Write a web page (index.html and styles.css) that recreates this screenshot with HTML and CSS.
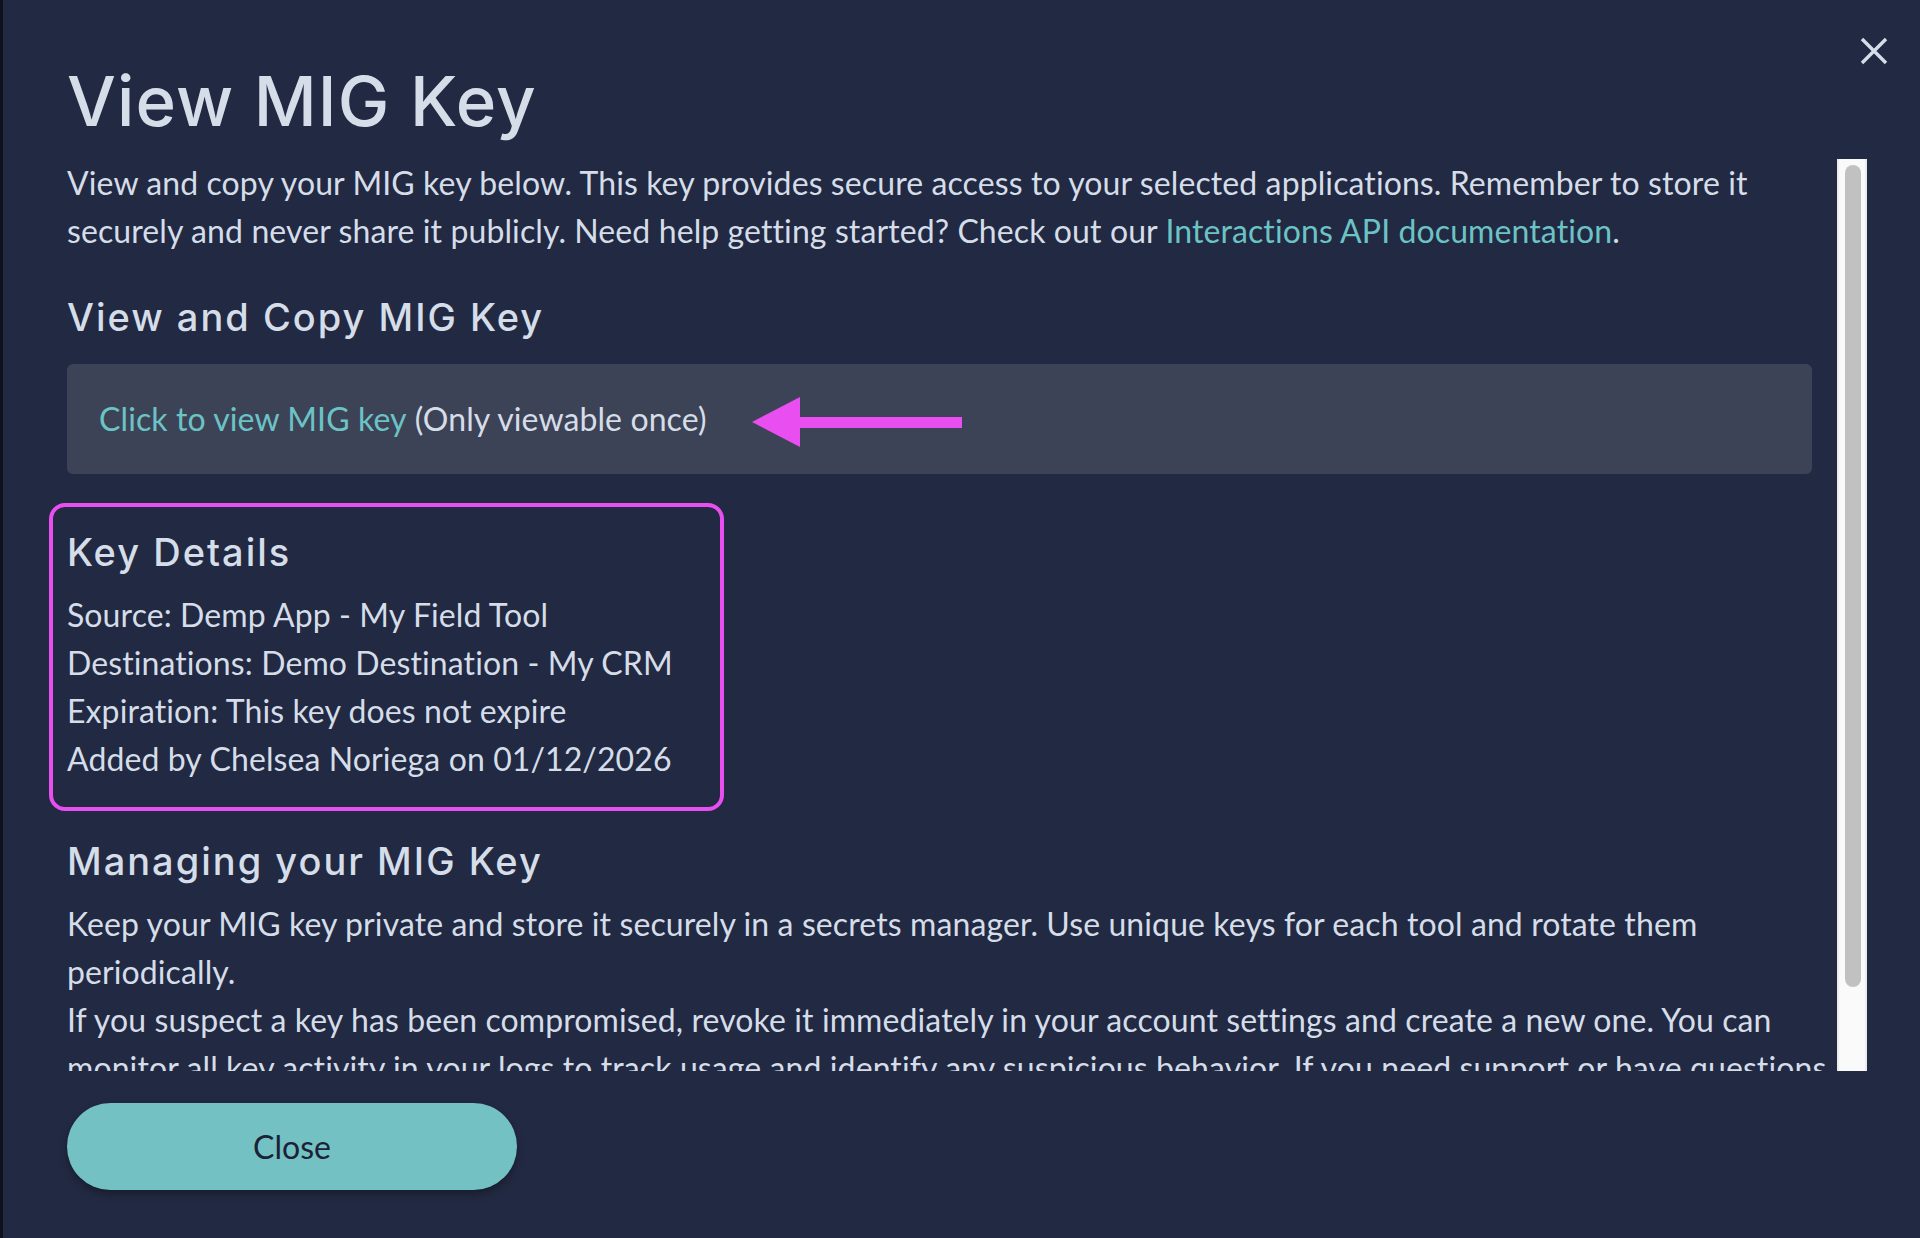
FILE: index.html
```html
<!DOCTYPE html>
<html lang="en">
<head>
<meta charset="utf-8">
<title>View MIG Key</title>
<link rel="stylesheet" href="styles.css">
</head>
<body>
<div class="modal">
  <header class="modal-header">
    <h1 class="title">View MIG Key</h1>
    <button class="close-x" aria-label="Close">
      <svg width="28" height="28" viewBox="0 0 28 28"><path d="M2 2 L26 26 M26 2 L2 26" stroke="#d5dde8" stroke-width="3.4" stroke-linecap="butt"/></svg>
    </button>
  </header>

  <div class="scroll-wrap">
    <div class="scroll-content">
      <p class="text">View and copy your MIG key below. This key provides secure access to your selected applications. Remember to store it securely and never share it publicly. Need help getting started? Check out our <a class="link" href="#">Interactions API documentation</a>.</p>

      <h2 class="heading heading-first">View and Copy MIG Key</h2>
      <div class="keybox">
        <a class="link" href="#">Click to view MIG key</a><span class="note">&nbsp;(Only viewable once)</span>
        <svg class="arrow" width="210" height="50" viewBox="0 0 210 50"><polygon points="0,25 48,0 48,20 210,20 210,31 48,31 48,50" fill="#e94ef1"/></svg>
      </div>

      <section class="details">
        <h2 class="heading">Key Details</h2>
        <p class="text">Source: Demp App - My Field Tool</p>
        <p class="text">Destinations: Demo Destination - My CRM</p>
        <p class="text">Expiration: This key does not expire</p>
        <p class="text">Added by Chelsea Noriega on 01/12/2026</p>
      </section>

      <h2 class="heading heading-manage">Managing your MIG Key</h2>
      <p class="text">Keep your MIG key private and store it securely in a secrets manager. Use unique keys for each tool and rotate them periodically.</p>
      <p class="text">If you suspect a key has been compromised, revoke it immediately in your account settings and create a new one. You can monitor all key activity in your logs to track usage and identify any suspicious behavior. If you need support or have questions, please contact our support team.</p>
    </div>
    <div class="scrollbar"><div class="thumb"></div></div>
  </div>

  <button class="close-btn">Close</button>
</div>
</body>
</html>
```
FILE: styles.css
```css
html, body {
  margin: 0;
  padding: 0;
  height: 100%;
}
body {
  background: #0e121c;
  display: flex;
  overflow: hidden;
}
.modal {
  flex: 1;
  margin-left: 3px;
  height: 1238px;
  box-sizing: border-box;
  background: #222942;
  padding: 37px 32px 0 64px;
  display: flex;
  flex-direction: column;
  color: #d5dde8;
  font-family: "Lato", "Liberation Sans", sans-serif;
}
.modal-header {
  display: flex;
  justify-content: space-between;
  align-items: flex-start;
}
.title {
  margin: 22px 0 0 0;
  font-family: "Inter", "Noto Sans", sans-serif;
  font-weight: 500;
  font-size: 69px;
  line-height: 84px;
  letter-spacing: 1.1px;
  color: #d5dde8;
}
.close-x {
  background: none;
  border: 0;
  padding: 0;
  width: 28px;
  height: 28px;
  display: block;
}
.close-x svg { display: block; }

.scroll-wrap {
  margin-top: 16px;
  height: 912px;
  display: flex;
  margin-right: 21px;
}
.scroll-content {
  flex: 1;
  overflow: hidden;
  margin-left: -24px;
  padding-left: 24px;
}
.scrollbar {
  width: 30px;
  box-sizing: border-box;
  background: #fafafa;
  border-left: 2px solid #ececec;
  border-right: 2px solid #ececec;
  padding: 6px 4px 0 6px;
}
.thumb {
  height: 822px;
  background: #c1c1c1;
  border-radius: 8px;
}

.text {
  margin: 0;
  font-size: 32px;
  line-height: 48px;
  letter-spacing: 0.1px;
  color: #d5dde8;
}
.link {
  color: #6cc3c5;
  text-decoration: none;
}
.heading {
  margin: 0;
  font-family: "Inter", "Noto Sans", sans-serif;
  font-weight: 500;
  font-size: 38px;
  line-height: 46px;
  letter-spacing: 2px;
  color: #d5dde8;
}
.heading-first {
  margin-top: 39px;
}
.keybox {
  margin: 24px 25px 0 0;
  height: 110px;
  box-sizing: border-box;
  background: #3d4356;
  border-radius: 6px;
  padding: 0 32px;
  display: flex;
  align-items: center;
  font-size: 32px;
  line-height: 48px;
  letter-spacing: 0.1px;
}
.note { color: #d5dde8; }
.arrow {
  display: block;
  margin-left: 45px;
  margin-top: 5px;
}
.details {
  position: relative;
  margin-top: 55px;
}
.details .heading {
  margin-bottom: 16px;
}
.details::after {
  content: "";
  position: absolute;
  left: -18px;
  top: -26px;
  width: 675px;
  height: 308px;
  box-sizing: border-box;
  border: 4px solid #e94ef1;
  border-radius: 16px;
  pointer-events: none;
}
.heading-manage {
  margin-top: 55px;
  margin-bottom: 16px;
}
.close-btn {
  margin-top: 32px;
  width: 450px;
  height: 87px;
  border: 0;
  border-radius: 44px;
  background: #73c1c3;
  color: #1b2236;
  font-family: "Lato", "Liberation Sans", sans-serif;
  font-size: 32px;
  box-shadow: 0 4px 8px rgba(0, 0, 0, 0.3);
  padding: 0;
}
```
